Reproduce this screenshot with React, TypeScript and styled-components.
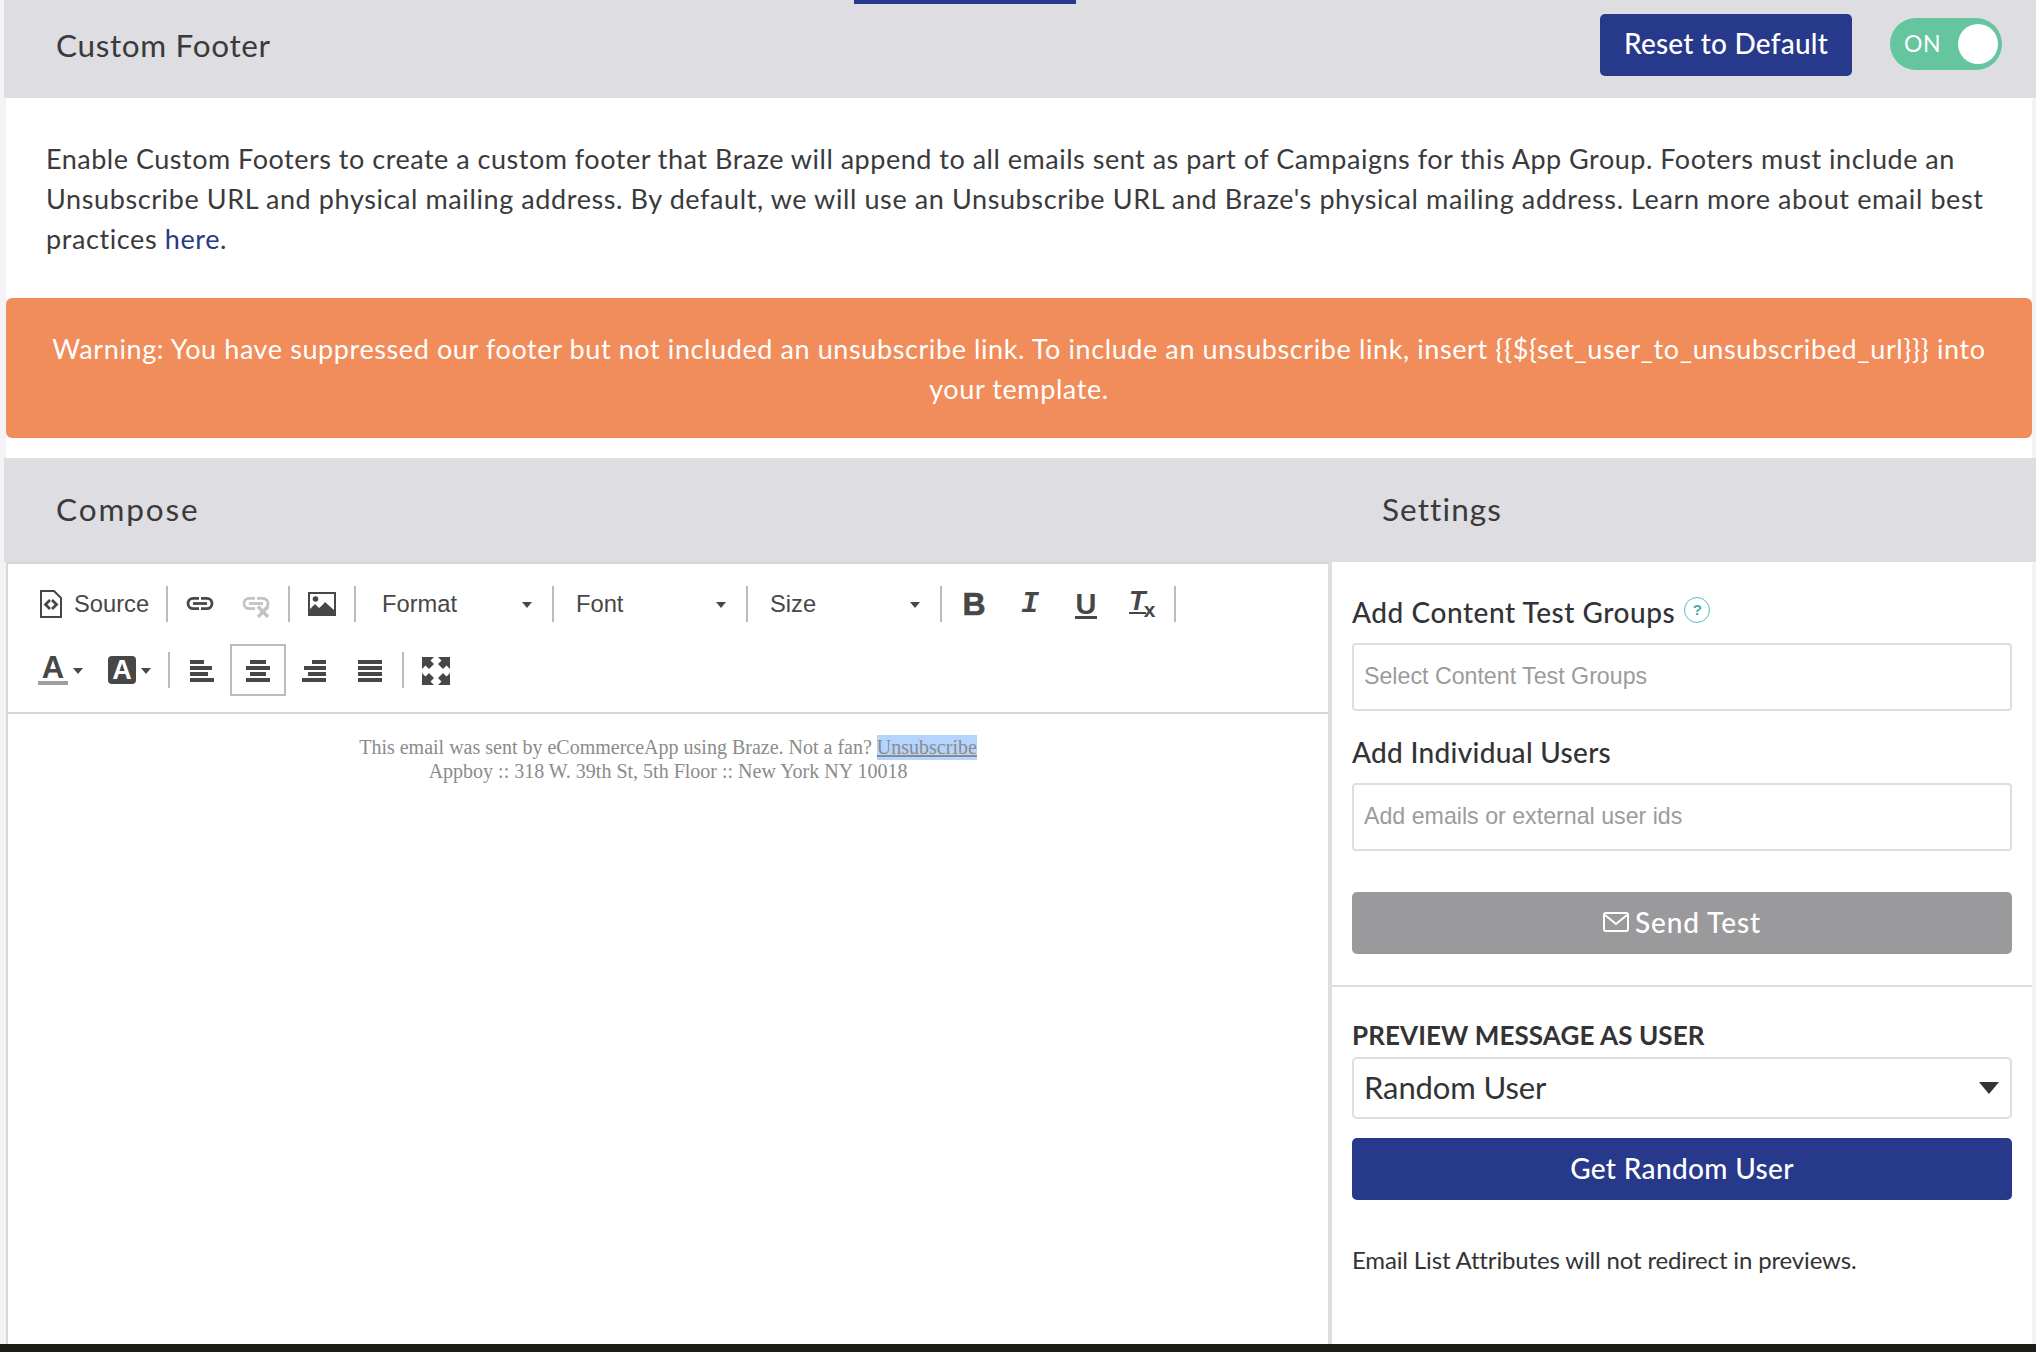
import React from "react";
import styled, { createGlobalStyle } from "styled-components";

const Global = createGlobalStyle`
  html, body { margin: 0; padding: 0; background: #f3f3f6; }
  * { box-sizing: border-box; }
  input::placeholder { color: #9b9b9b; opacity: 1; }
`;

const navy = "#27398a";
const panelGrey = "#dddde2";
const ui = `Lato, "Noto Sans", sans-serif`;
const ck = `"Liberation Sans", Arial, sans-serif`;
const ink = "#474747";

const Page = styled.div`
  position: relative;
  width: 2036px;
  height: 1352px;
  overflow: hidden;
  display: flex;
  flex-direction: column;
  padding-left: 4px;
  font-family: ${ui};
  color: #3a3a3c;
`;
const TabMark = styled.div`
  position: absolute;
  left: 854px;
  top: 0;
  width: 222px;
  height: 4px;
  background: ${navy};
`;
const TopHeader = styled.header`
  height: 98px;
  flex: none;
  display: flex;
  align-items: center;
  background: ${panelGrey};
  padding: 0 34px 8px 52px;
`;
const SectionTitle = styled.h2<{ $width?: number; $track: number }>`
  margin: -1px 0 0;
  font-size: 31.5px;
  font-weight: 400;
  letter-spacing: ${(p) => p.$track}px;
  color: #3a3a3c;
  ${(p) => (p.$width ? `width: ${p.$width}px;` : "")}
`;
const Spacer = styled.div`
  flex: 1;
`;
const ResetButton = styled.button`
  width: 252px;
  height: 62px;
  padding: 0 0 4px;
  border: 0;
  border-radius: 5px;
  background: ${navy};
  color: #fff;
  font: 500 28px ${ui};
  letter-spacing: 0.2px;
`;
const Toggle = styled.div`
  position: relative;
  width: 112px;
  height: 52px;
  margin: -2px 0 0 38px;
  border-radius: 26px;
  background: #65c59f;
  color: #fff;
  font-size: 23px;
  letter-spacing: 0.6px;
  line-height: 50px;
  padding-left: 14px;
`;
const Knob = styled.span`
  position: absolute;
  right: 4px;
  top: 6px;
  width: 40px;
  height: 40px;
  border-radius: 50%;
  background: #fff;
`;
const Sheet = styled.section`
  flex: none;
  margin: 0 4px 0 2px;
  padding-bottom: 20px;
  background: #fff;
`;
const Intro = styled.div`
  padding: 41px 0 39px 40px;
  font-size: 27px;
  line-height: 40px;
  white-space: nowrap;
  color: #3a3a3c;
`;
const IntroLine = styled.div<{ $track: number }>`
  letter-spacing: ${(p) => p.$track}px;
`;
const HelpLink = styled.a`
  color: ${navy};
`;
const Warning = styled.div`
  height: 140px;
  padding-top: 31px;
  border-radius: 6px;
  background: #f18c5b;
  color: #fff;
  font-size: 27px;
  line-height: 40px;
  letter-spacing: 0.6px;
  text-align: center;
  white-space: nowrap;
`;
const ComposeHeader = styled.div`
  height: 104px;
  flex: none;
  display: flex;
  align-items: center;
  background: ${panelGrey};
  padding: 0 0 2px 52px;
`;
const Workspace = styled.div`
  flex: 1;
  min-height: 0;
  display: flex;
  margin: 0 4px 0 2px;
  background: #fff;
`;
const Editor = styled.div`
  width: 1322px;
  flex: none;
  border-left: 2px solid #d6d6d6;
  display: flex;
  flex-direction: column;
`;
const Toolbar = styled.div`
  height: 152px;
  flex: none;
  padding: 14px 0 0 24px;
  border-top: 2px solid #d6d6d6;
  border-bottom: 2px solid #d6d6d6;
  display: flex;
  flex-direction: column;
  gap: 14px;
  color: ${ink};
  font-family: ${ck};
`;
const ToolRow = styled.div`
  height: 52px;
  display: flex;
  align-items: center;
`;
const Sep = styled.span`
  width: 2px;
  height: 36px;
  flex: none;
  background: #bcbcbc;
`;
const Group = styled.div`
  display: flex;
  padding: 0 4px;
`;
const SourceButton = styled.div`
  width: 134px;
  display: flex;
  align-items: center;
  gap: 12px;
  padding-left: 8px;
  font-size: 23.7px;
`;
const ToolButton = styled.div<{ $active?: boolean }>`
  width: 56px;
  height: 52px;
  flex: none;
  display: flex;
  align-items: center;
  justify-content: center;
  ${(p) => (p.$active ? "border: 2px solid #bcbcbc;" : "")}
`;
const Combo = styled.div<{ $width: number; $inset: number }>`
  width: ${(p) => p.$width}px;
  display: flex;
  align-items: center;
  justify-content: space-between;
  padding: 0 20px 0 ${(p) => p.$inset}px;
  font-size: 23.7px;
`;
const Caret = styled.span`
  width: 0;
  height: 0;
  flex: none;
  margin-top: 2px;
  border-left: 5.5px solid transparent;
  border-right: 5.5px solid transparent;
  border-top: 6px solid ${ink};
`;
const ColorButton = styled.div<{ $pad: number }>`
  width: 68px;
  display: flex;
  align-items: center;
  padding-left: ${(p) => p.$pad}px;
  gap: 5px;
`;
const ColorA = styled.span`
  width: 30px;
  height: 30px;
  text-align: center;
  font: 700 31px/25px ${ck};
  border-bottom: 4px solid #9e9e9e;
  color: ${ink};
`;
const BoxA = styled.span`
  width: 28px;
  height: 28px;
  border-radius: 4px;
  background: ${ink};
  color: #fff;
  text-align: center;
  font: 700 27px/28px ${ck};
`;
const BoldGlyph = styled.span`
  font: 700 32px/32px ${ck};
  color: ${ink};
  -webkit-text-stroke: 0.6px ${ink};
`;
const ItalicGlyph = styled.span`
  font: italic 700 30px/30px "Liberation Mono", monospace;
  color: ${ink};
`;
const UnderGlyph = styled.span`
  width: 22px;
  text-align: center;
  margin-top: 2px;
  font: 700 29px/24px ${ck};
  color: ${ink};
  border-bottom: 3px solid ${ink};
`;
const ClearGlyph = styled.span`
  width: 17px;
  margin: -3px 0 0 -6px;
  text-align: center;
  font: italic 700 27px/21px ${ck};
  color: ${ink};
  border-bottom: 2px solid ${ink};
`;
const SubX = styled.span`
  font: 700 21px/18px ${ck};
  color: ${ink};
  align-self: flex-end;
  margin: 0 -6px 11px -2px;
`;
const EditArea = styled.div`
  flex: 1;
  padding-top: 21px;
  text-align: center;
  font-family: "Liberation Serif", "Times New Roman", serif;
  font-size: 20px;
  line-height: 24px;
  color: #8b8b8b;
`;
const Selected = styled.a`
  background: #b4d5fe;
  padding: 1px 0 2px;
  text-decoration: underline;
`;
const Settings = styled.aside`
  flex: 1;
  min-width: 0;
  border-left: 4px solid ${panelGrey};
  display: flex;
  flex-direction: column;
`;
const SettingsTop = styled.div`
  height: 425px;
  flex: none;
  padding: 33px 20px 0 20px;
  border-bottom: 2px solid ${panelGrey};
`;
const SettingsBottom = styled.div`
  padding: 31px 20px 0 20px;
`;
const FieldLabel = styled.div<{ $top?: number; $track: number }>`
  height: 34px;
  margin-top: ${(p) => p.$top ?? 0}px;
  display: flex;
  align-items: center;
  gap: 9px;
  font-size: 28px;
  font-weight: 500;
  letter-spacing: ${(p) => p.$track}px;
  color: #333335;
`;
const Help = styled.span`
  width: 26px;
  height: 26px;
  margin-top: -4px;
  border: 1.5px solid #5cbcc0;
  border-radius: 50%;
  color: #46a9b0;
  text-align: center;
  letter-spacing: 0;
  font: 700 15px/23px ${ck};
`;
const TextField = styled.input`
  display: block;
  width: 100%;
  height: 68px;
  margin-top: 14px;
  padding: 0 10px 1px;
  border: 2px solid ${panelGrey};
  border-radius: 4px;
  outline: none;
  font: 400 23.2px ${ck};
  background: #fff;
`;
const WideButton = styled.button<{ $grey?: boolean; $top: number; $track: number }>`
  width: 100%;
  height: 62px;
  margin-top: ${(p) => p.$top}px;
  padding: 0 0 2px;
  display: flex;
  align-items: center;
  justify-content: center;
  gap: 6px;
  border: 0;
  border-radius: 5px;
  background: ${(p) => (p.$grey ? "#9a9a9c" : navy)};
  color: #fff;
  font: 500 28px ${ui};
  letter-spacing: ${(p) => p.$track}px;
`;
const PreviewLabel = styled.div`
  height: 34px;
  font-size: 26px;
  font-weight: 700;
  letter-spacing: 0.1px;
  line-height: 34px;
  color: #333335;
`;
const SelectBox = styled.div`
  height: 62px;
  margin-top: 5px;
  display: flex;
  align-items: center;
  justify-content: space-between;
  padding: 0 11px 2px 10px;
  border: 2px solid ${panelGrey};
  border-radius: 5px;
  font-size: 31px;
  letter-spacing: -0.1px;
  color: #333335;
`;
const SelectCaret = styled.span`
  width: 0;
  height: 0;
  margin-top: 2px;
  border-left: 10px solid transparent;
  border-right: 10px solid transparent;
  border-top: 12px solid #333335;
`;
const Note = styled.p`
  margin: 45px 0 0;
  font-size: 24px;
  line-height: 30px;
  letter-spacing: -0.15px;
  color: #333335;
`;
const BottomBar = styled.div`
  height: 8px;
  flex: none;
  margin-left: -4px;
  background: #1e1d18;
`;
const LowSvg = styled.svg`
  margin-top: 2px;
`;

const SourceIcon = () => (
  <svg width="22" height="28" viewBox="0 0 22 28">
    <path d="M1 1h13l7 7v19H1z" fill="none" stroke={ink} strokeWidth="2" />
    <path d="M10 10l-4.5 4.5 4.5 4.5M12 10l4.5 4.5-4.5 4.5" fill="none" stroke={ink} strokeWidth="2.8" />
  </svg>
);
const LinkIcon = () => (
  <svg width="28" height="28" viewBox="0 0 28 28" fill="none" stroke={ink} strokeWidth="2.8">
    <path d="M13 8.3H7.2a5.2 5.2 0 0 0 0 10.4H13" />
    <path d="M15 8.3h5.8a5.2 5.2 0 0 1 0 10.4H15" />
    <path d="M7 13.5h14" />
  </svg>
);
const UnlinkIcon = () => (
  <svg width="28" height="28" viewBox="0 0 28 28" fill="none" stroke="#c4c4c4" strokeWidth="2.8">
    <path d="M13 8.3H7.2a5.2 5.2 0 0 0 0 10.4H13" />
    <path d="M15 8.3h5.8a5.2 5.2 0 0 1 4 8.5" />
    <path d="M7 13.5h14" />
    <path d="M16 16.5l10 10.5M26 16.5L16 27" strokeWidth="3.6" />
  </svg>
);
const ImageIcon = () => (
  <svg width="28" height="24" viewBox="0 0 28 24">
    <rect x="1" y="1" width="26" height="22" fill="none" stroke={ink} strokeWidth="2" />
    <circle cx="7.5" cy="7" r="2.8" fill={ink} />
    <path d="M1 23v-5l6-6 4 4 3-2.5 3-3.5 10 9v4z" fill={ink} />
  </svg>
);
const AlignIcon = ({ lines }: { lines: [number, number][] }) => (
  <LowSvg width="24" height="22" viewBox="0 0 24 22">
    {lines.map(([x, w], i) => (
      <rect key={i} x={x} y={i * 6} width={w} height="4" fill={ink} />
    ))}
  </LowSvg>
);
const MaxIcon = () => (
  <LowSvg width="28" height="28" viewBox="0 0 28 28" fill={ink}>
    <path d="M0 0h12L8.500 3.500l3.500 3.500-5 5-3.500-3.500L0 12zM28 0v12l-3.500-3.500L21 12l-5-5 3.500-3.500L16 0zM0 28V16l3.500 3.500L7 16l5 5-3.500 3.500L12 28zM28 28H16l3.500-3.500L16 21l5-5 3.500 3.500L28 16z" />
  </LowSvg>
);
const MailIcon = () => (
  <svg width="26" height="22" viewBox="0 0 26 22">
    <rect x="1" y="2" width="24" height="18" rx="2" fill="none" stroke="#fff" strokeWidth="2" />
    <path d="M2 4l11 9 11-9" fill="none" stroke="#fff" strokeWidth="2" />
  </svg>
);

export default function App() {
  return (
    <Page>
      <Global />
      <TabMark />
      <TopHeader>
        <SectionTitle $track={0.65}>Custom Footer</SectionTitle>
        <Spacer />
        <ResetButton>Reset to Default</ResetButton>
        <Toggle>
          ON
          <Knob />
        </Toggle>
      </TopHeader>
      <Sheet>
        <Intro>
          <IntroLine $track={0.51}>
            Enable Custom Footers to create a custom footer that Braze will append to all emails sent as part of Campaigns for this App Group. Footers must include an
          </IntroLine>
          <IntroLine $track={0.6}>
            Unsubscribe URL and physical mailing address. By default, we will use an Unsubscribe URL and Braze's physical mailing address. Learn more about email best
          </IntroLine>
          <IntroLine $track={0.6}>
            practices <HelpLink>here</HelpLink>.
          </IntroLine>
        </Intro>
        <Warning>
          Warning: You have suppressed our footer but not included an unsubscribe link. To include an unsubscribe link, insert {"{{${set_user_to_unsubscribed_url}}}"} into
          <br />
          your template.
        </Warning>
      </Sheet>
      <ComposeHeader>
        <SectionTitle $width={1326} $track={1.9}>Compose</SectionTitle>
        <SectionTitle $track={1.1}>Settings</SectionTitle>
      </ComposeHeader>
      <Workspace>
        <Editor>
          <Toolbar>
            <ToolRow>
              <SourceButton>
                <SourceIcon />
                Source
              </SourceButton>
              <Sep />
              <Group>
                <ToolButton><LinkIcon /></ToolButton>
                <ToolButton><UnlinkIcon /></ToolButton>
              </Group>
              <Sep />
              <Group>
                <ToolButton><ImageIcon /></ToolButton>
              </Group>
              <Sep />
              <Combo $width={196} $inset={26}>Format<Caret /></Combo>
              <Sep />
              <Combo $width={192} $inset={22}>Font<Caret /></Combo>
              <Sep />
              <Combo $width={192} $inset={22}>Size<Caret /></Combo>
              <Sep />
              <Group>
                <ToolButton><BoldGlyph>B</BoldGlyph></ToolButton>
                <ToolButton><ItalicGlyph>I</ItalicGlyph></ToolButton>
                <ToolButton><UnderGlyph>U</UnderGlyph></ToolButton>
                <ToolButton><ClearGlyph>T</ClearGlyph><SubX>x</SubX></ToolButton>
              </Group>
              <Sep />
            </ToolRow>
            <ToolRow>
              <ColorButton $pad={6}><ColorA>A</ColorA><Caret /></ColorButton>
              <ColorButton $pad={8}><BoxA>A</BoxA><Caret /></ColorButton>
              <Sep />
              <Group>
                <ToolButton><AlignIcon lines={[[0, 14], [0, 22], [0, 18], [0, 24]]} /></ToolButton>
                <ToolButton $active><AlignIcon lines={[[4, 16], [0, 24], [4, 16], [0, 24]]} /></ToolButton>
                <ToolButton><AlignIcon lines={[[10, 14], [2, 22], [6, 18], [0, 24]]} /></ToolButton>
                <ToolButton><AlignIcon lines={[[0, 24], [0, 24], [0, 24], [0, 24]]} /></ToolButton>
              </Group>
              <Sep />
              <Group>
                <ToolButton><MaxIcon /></ToolButton>
              </Group>
            </ToolRow>
          </Toolbar>
          <EditArea>
            This email was sent by eCommerceApp using Braze. Not a fan? <Selected>Unsubscribe</Selected>
            <br />
            Appboy :: 318 W. 39th St, 5th Floor :: New York NY 10018
          </EditArea>
        </Editor>
        <Settings>
          <SettingsTop>
            <FieldLabel $track={0.55}>
              Add Content Test Groups
              <Help>?</Help>
            </FieldLabel>
            <TextField placeholder="Select Content Test Groups" />
            <FieldLabel $top={24} $track={0.3}>Add Individual Users</FieldLabel>
            <TextField placeholder="Add emails or external user ids" />
            <WideButton $grey $top={41} $track={0.9}>
              <MailIcon />
              Send Test
            </WideButton>
          </SettingsTop>
          <SettingsBottom>
            <PreviewLabel>PREVIEW MESSAGE AS USER</PreviewLabel>
            <SelectBox>
              Random User
              <SelectCaret />
            </SelectBox>
            <WideButton $top={19} $track={0.35}>Get Random User</WideButton>
            <Note>Email List Attributes will not redirect in previews.</Note>
          </SettingsBottom>
        </Settings>
      </Workspace>
      <BottomBar />
    </Page>
  );
}
